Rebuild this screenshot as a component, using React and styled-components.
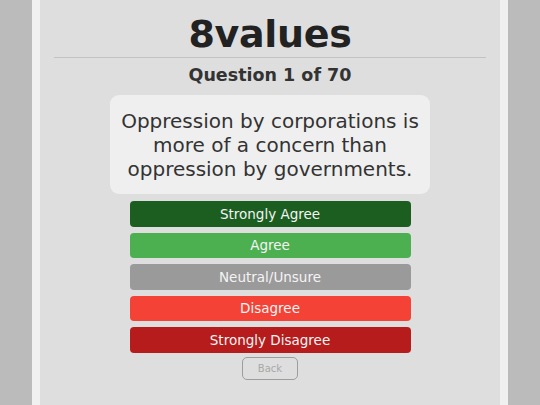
import React from 'react';
import styled, { createGlobalStyle } from 'styled-components';

const GlobalStyle = createGlobalStyle`
    html, body {
        margin: 0;
        height: 100%;
        background-color: #bbbbbb;
        font-family: "DejaVu Sans", "Noto Sans", sans-serif;
    }
    #root {
        height: 100%;
    }
`;

const Page = styled.div`
    box-sizing: border-box;
    width: 476px;
    min-height: 100%;
    margin: 0 auto;
    background-color: #dedede;
    border-left: 8px solid #f0f0f0;
    border-right: 8px solid #f0f0f0;
    padding: 0 14px;
    display: flex;
    flex-direction: column;
    align-items: center;
`;

const Title = styled.h1`
    margin: 11px 0 0;
    font-size: 38px;
    line-height: 46px;
    font-weight: 700;
    color: #222;
    letter-spacing: -0.3px;
`;

const Rule = styled.hr`
    width: 100%;
    margin: 0;
    border: none;
    border-top: 1px solid #c2c2c2;
`;

const Counter = styled.h2`
    margin: 6px 0 0;
    font-size: 17.5px;
    line-height: 22px;
    font-weight: 700;
    color: #333;
`;

const QuestionBox = styled.div`
    box-sizing: border-box;
    width: 320px;
    height: 99px;
    margin-top: 9px;
    background-color: #efefef;
    border-radius: 9px;
    display: flex;
    align-items: center;
    justify-content: center;
    text-align: center;
    font-size: 20px;
    line-height: 24px;
    color: #333;
    padding: 0 6px;
`;

const Answers = styled.div`
    display: flex;
    flex-direction: column;
    gap: 6px;
    margin-top: 7px;
    width: 281px;
`;

const AnswerButton = styled.button`
    height: 25.5px;
    border: none;
    border-radius: 4px;
    background-color: ${p => p.$color};
    color: #f4f4f4;
    font-family: inherit;
    font-size: 13.5px;
    padding: 0;
    cursor: pointer;
`;

const BackButton = styled.button`
    margin-top: 4px;
    width: 56px;
    height: 23px;
    border: 1px solid #9d9d9d;
    border-radius: 5px;
    background: transparent;
    color: #a8a8a8;
    font-family: inherit;
    font-size: 10px;
    padding: 0;
`;

const answers = [
    { label: 'Strongly Agree', color: '#1b5e20' },
    { label: 'Agree', color: '#4caf50' },
    { label: 'Neutral/Unsure', color: '#9a9a9a' },
    { label: 'Disagree', color: '#f44336' },
    { label: 'Strongly Disagree', color: '#b71c1c' },
];

const App = () => {
    return (
        <>
            <GlobalStyle />
            <Page>
                <Title>8values</Title>
                <Rule />
                <Counter>Question 1 of 70</Counter>
                <QuestionBox>
                    Oppression by corporations is more of a concern than oppression by governments.
                </QuestionBox>
                <Answers>
                    {answers.map(a => (
                        <AnswerButton key={a.label} $color={a.color}>{a.label}</AnswerButton>
                    ))}
                </Answers>
                <BackButton>Back</BackButton>
            </Page>
        </>
    );
};

export default App;
